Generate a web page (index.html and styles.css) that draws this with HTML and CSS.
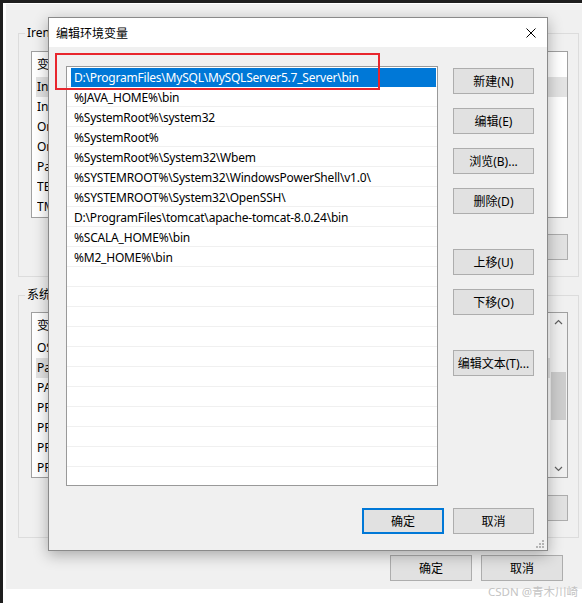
FILE: index.html
```html
<!DOCTYPE html>
<html lang="zh-CN">
<head>
<meta charset="UTF-8" />
<meta name="viewport" content="width=device-width, initial-scale=1.0" />
<title>编辑环境变量</title>
<link rel="stylesheet" href="styles.css">
</head>
<body>
  <div class="screen">
    <!-- background window: 环境变量 -->
    <div class="window">
      <div class="group">
        <span class="group-title">Irene 的用户变量</span>
        <div class="listview">
          <div class="lv-body">
            <div class="lv-head"><span class="col-name">变量</span><span class="col-value">值</span></div>
            <div class="lv-row hot"><span class="col-name">IntelliJ IDEA</span><span class="col-value">D:\ProgramFiles\JetBrains\bin;</span></div>
            <div class="lv-row"><span class="col-name">IntelliJ IDEA Community Edition</span><span class="col-value">D:\ProgramFiles\IDEA\bin;</span></div>
            <div class="lv-row"><span class="col-name">OneDrive</span><span class="col-value">C:\Users\Irene\OneDrive</span></div>
            <div class="lv-row"><span class="col-name">OneDriveConsumer</span><span class="col-value">C:\Users\Irene\OneDrive</span></div>
            <div class="lv-row"><span class="col-name">Path</span><span class="col-value">D:\ProgramFiles\MySQL\bin;</span></div>
            <div class="lv-row"><span class="col-name">TEMP</span><span class="col-value">%USERPROFILE%\AppData\Local\Temp</span></div>
            <div class="lv-row"><span class="col-name">TMP</span><span class="col-value">%USERPROFILE%\AppData\Local\Temp</span></div>
          </div>
        </div>
        <div class="btn-row">
          <button class="btn">新建(N)...</button>
          <button class="btn">编辑(E)...</button>
          <button class="btn">删除(D)</button>
        </div>
      </div>

      <div class="group group-sys">
        <span class="group-title">系统变量</span>
        <div class="listview listview-sys">
          <div class="lv-body">
            <div class="lv-head"><span class="col-name">变量</span><span class="col-value">值</span></div>
            <div class="lv-row"><span class="col-name">OS</span><span class="col-value">Windows_NT</span></div>
            <div class="lv-row hot"><span class="col-name">Path</span><span class="col-value">D:\ProgramFiles\MySQL\bin;</span></div>
            <div class="lv-row"><span class="col-name">PATHEXT</span><span class="col-value">.COM;.EXE;.BAT;.CMD</span></div>
            <div class="lv-row"><span class="col-name">PROCESSOR_ARCHITECTURE</span><span class="col-value">AMD64</span></div>
            <div class="lv-row"><span class="col-name">PROCESSOR_IDENTIFIER</span><span class="col-value">Intel64 Family 6</span></div>
            <div class="lv-row"><span class="col-name">PROCESSOR_LEVEL</span><span class="col-value">6</span></div>
            <div class="lv-row"><span class="col-name">PROCESSOR_REVISION</span><span class="col-value">8e0a</span></div>
          </div>
          <div class="scrollbar">
            <div class="sb-arrow">
              <svg width="9" height="6" viewBox="0 0 9 6"><polyline points="1,5 4.5,1.5 8,5" fill="none" stroke="#606060" stroke-width="1.2"/></svg>
            </div>
            <div class="sb-track"><div class="sb-thumb"></div></div>
            <div class="sb-arrow">
              <svg width="9" height="6" viewBox="0 0 9 6"><polyline points="1,1 4.5,4.5 8,1" fill="none" stroke="#606060" stroke-width="1.2"/></svg>
            </div>
          </div>
        </div>
        <div class="btn-row btn-row-sys">
          <button class="btn">新建(W)...</button>
          <button class="btn">编辑(I)...</button>
          <button class="btn">删除(L)</button>
        </div>
      </div>

      <div class="footer">
        <button class="btn btn-wide">确定</button>
        <button class="btn btn-wide">取消</button>
      </div>
    </div>

    <div class="watermark">CSDN @青木川崎</div>

    <!-- dialog: 编辑环境变量 -->
    <div class="dialog">
      <div class="dlg-title">
        <span>编辑环境变量</span>
        <span class="dlg-close">
          <svg width="10" height="10" viewBox="0 0 10 10"><path d="M0.5 0.5 L9.5 9.5 M9.5 0.5 L0.5 9.5" stroke="#000" stroke-width="1"/></svg>
        </span>
      </div>
      <div class="dlg-body">
        <div class="pathlist">
          <div class="path-row selected"><span class="path-text">D:\ProgramFiles\MySQL\MySQLServer5.7_Server\bin</span></div>
          <div class="path-row"><span class="path-text">%JAVA_HOME%\bin</span></div>
          <div class="path-row"><span class="path-text">%SystemRoot%\system32</span></div>
          <div class="path-row"><span class="path-text">%SystemRoot%</span></div>
          <div class="path-row"><span class="path-text">%SystemRoot%\System32\Wbem</span></div>
          <div class="path-row"><span class="path-text">%SYSTEMROOT%\System32\WindowsPowerShell\v1.0\</span></div>
          <div class="path-row"><span class="path-text">%SYSTEMROOT%\System32\OpenSSH\</span></div>
          <div class="path-row"><span class="path-text">D:\ProgramFiles\tomcat\apache-tomcat-8.0.24\bin</span></div>
          <div class="path-row"><span class="path-text">%SCALA_HOME%\bin</span></div>
          <div class="path-row"><span class="path-text">%M2_HOME%\bin</span></div>
        </div>
        <div class="dlg-buttons">
          <button class="btn btn-side">新建(N)</button>
          <button class="btn btn-side">编辑(E)</button>
          <button class="btn btn-side">浏览(B)...</button>
          <button class="btn btn-side">删除(D)</button>
          <button class="btn btn-side spaced">上移(U)</button>
          <button class="btn btn-side">下移(O)</button>
          <button class="btn btn-side spaced">编辑文本(T)...</button>
        </div>
        <div class="dlg-footer">
          <button class="btn btn-ok">确定</button>
          <button class="btn btn-side">取消</button>
        </div>
      </div>
      <svg class="grip" width="8" height="8" viewBox="0 0 8 8">
        <rect x="6" y="0" width="2" height="2" fill="#b4b4b4"/>
        <rect x="3" y="3" width="2" height="2" fill="#b4b4b4"/>
        <rect x="6" y="3" width="2" height="2" fill="#b4b4b4"/>
        <rect x="0" y="6" width="2" height="2" fill="#b4b4b4"/>
        <rect x="3" y="6" width="2" height="2" fill="#b4b4b4"/>
        <rect x="6" y="6" width="2" height="2" fill="#b4b4b4"/>
      </svg>
    </div>

    <!-- annotation -->
    <div class="mark"></div>
  </div>
</body>
</html>
```
FILE: styles.css
```css
html,body{margin:0;height:100%;overflow:hidden;}
body{background:#fff;color:#000;font:12px "Noto Sans","Noto Sans CJK SC",sans-serif;}
button{font:inherit;color:#000;}

.screen{position:relative;width:582px;height:603px;box-sizing:border-box;border-top:3px solid #1e1e1e;border-left:3px solid #1e1e1e;}

/* ------------ background window ------------- */
.window{margin:1px 0 0 3px;width:576px;height:585px;box-sizing:border-box;background:#f0f0f0;padding:29px 3px 8px 12px;display:flex;flex-direction:column;}
.group{position:relative;border:1px solid #dcdcdc;padding:17px 10px 16px 12px;}
.group-sys{margin-top:18px;padding-top:16px;}
.group-title{position:absolute;top:-9px;left:6px;padding:0 2px;background:#f0f0f0;line-height:16px;white-space:nowrap;}
.listview{height:167px;box-sizing:border-box;border:1px solid #a0a0a0;background:#fff;display:flex;overflow:hidden;}
.listview-sys{height:166px;}
.lv-body{flex:1;min-width:0;}
.lv-head{height:25px;line-height:25px;display:flex;padding-left:5px;}
.lv-row{height:20px;line-height:20px;display:flex;margin-left:4px;padding-left:1px;}
.lv-row.hot{background:#e3e3e3;}
.col-name{width:165px;white-space:nowrap;overflow:hidden;}
.col-value{width:300px;white-space:nowrap;overflow:hidden;}
.scrollbar{width:17px;background:#f0f0f0;display:flex;flex-direction:column;}
.sb-arrow{height:17px;display:flex;align-items:center;justify-content:center;}
.sb-track{flex:1;padding:42px 1px 0;}
.sb-thumb{height:48px;background:#cdcdcd;}
.btn{height:26px;box-sizing:border-box;border:1px solid #adadad;background:#e1e1e1;padding:0;white-space:nowrap;}
.btn-row{display:flex;justify-content:flex-end;gap:8px;margin-top:16px;}
.btn-row .btn{width:88px;}
.btn-row-sys{margin-top:17px;}
.footer{display:flex;justify-content:flex-end;gap:9px;margin-top:17px;padding-right:16px;}
.btn-wide{width:82px;}
.watermark{position:absolute;right:4px;bottom:4px;color:#c4c4c4;font-size:11.5px;}

/* ------------ dialog ------------- */
.dialog{position:absolute;left:45px;top:14px;width:500px;height:534px;box-sizing:border-box;border:1px solid #8a8a8a;background:#f0f0f0;box-shadow:0 4px 14px rgba(0,0,0,.3);}
.dlg-title{height:29px;background:#fff;display:flex;align-items:center;justify-content:space-between;padding-left:7px;}
.dlg-close{width:30px;height:29px;display:flex;align-items:center;justify-content:center;margin-right:1px;}
.dlg-body{display:grid;grid-template-columns:372px 81px;column-gap:15px;padding:19px 13px 16px 17px;}
.pathlist{height:420px;box-sizing:border-box;border:1px solid #999;overflow:hidden;background:repeating-linear-gradient(to bottom,#fff 0 19px,#f0f0f0 19px 20px);}
.path-row{height:20px;line-height:19px;padding:0 1px 0 4px;white-space:nowrap;letter-spacing:-.2px;}
.path-text{display:block;height:19px;padding-left:3px;}
.path-row.selected .path-text{background:#0078d7;color:#fff;margin-top:1px;letter-spacing:-.22px;}
.dlg-buttons{display:flex;flex-direction:column;gap:14px;padding-top:2px;}
.btn-side{width:81px;}
.spaced{margin-top:21px;}
.dlg-footer{grid-column:1 / -1;display:flex;justify-content:flex-end;gap:9px;margin-top:22px;}
.btn-ok{width:82px;border:2px solid #0078d7;}
.grip{position:absolute;right:3px;bottom:2px;}

/* ------------ annotation ------------- */
.mark{position:absolute;left:52px;top:50px;width:325px;height:37px;box-sizing:border-box;border:2px solid #e8262d;}
```
